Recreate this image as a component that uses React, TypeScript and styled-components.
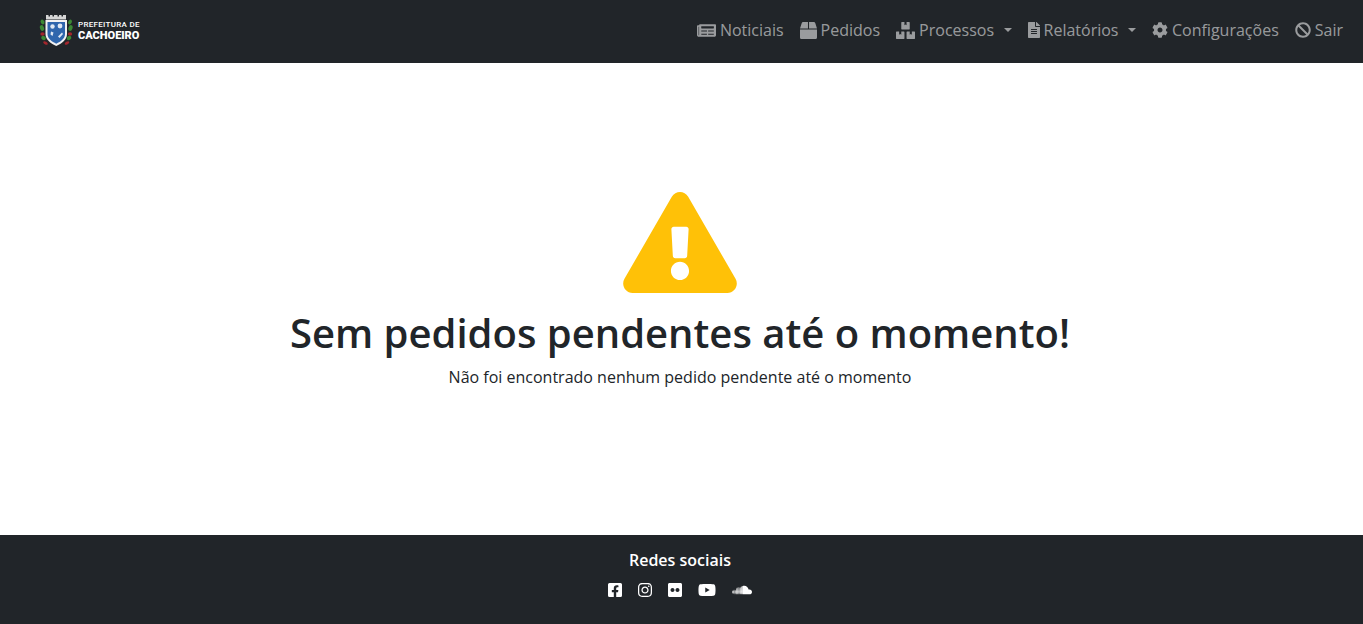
import React from "react";
import styled, { createGlobalStyle } from "styled-components";
import {
  FaBan,
  FaBox,
  FaBoxes,
  FaCog,
  FaExclamationTriangle,
  FaFacebookSquare,
  FaFileAlt,
  FaFlickr,
  FaInstagram,
  FaNewspaper,
  FaSoundcloud,
  FaYoutube,
} from "react-icons/fa";

const GlobalStyle = createGlobalStyle`
  * {
    box-sizing: border-box;
  }
  body {
    margin: 0;
    font-family: "Open Sans", sans-serif;
    font-size: 16px;
    color: #212529;
    background: #fff;
  }
`;

function Laurel() {
  return (
    <>
      <ellipse cx="4.500" cy="7" rx="1.800" ry="2.600" fill="#3b8a35" transform="rotate(-25 4.500 7)" />
      <ellipse cx="4" cy="13" rx="2" ry="3" fill="#3b8a35" transform="rotate(-20 4 13)" />
      <ellipse cx="4.500" cy="19" rx="2.200" ry="1.700" fill="#a3262c" />
      <ellipse cx="5.500" cy="23" rx="2.400" ry="2" fill="#3b8a35" transform="rotate(30 5.500 23)" />
      <ellipse cx="7.500" cy="28" rx="2.500" ry="1.400" fill="#a3262c" transform="rotate(30 7.500 28)" />
    </>
  );
}

function Logo() {
  return (
    <LogoBox>
      <svg width="36" height="34" viewBox="0 0 36 34">
        {/* crown */}
        <path
          d="M8 0h2.500v1.500H12V0h2.500v1.500H16V0h3.500v1.500H21V0h2.500v1.500H25V0h3v4.500H8z"
          fill="#d6d6d6"
        />
        {/* shield */}
        <path d="M7.500 5h21.500v14c0 6-5.500 9.500-10.750 12C13 28.500 7.500 25 7.500 19z" fill="#f2f2f2" />
        <path d="M9.500 7h17.500v12c0 4.800-4.300 7.500-8.750 9.700C13.800 26.500 9.500 23.800 9.500 19z" fill="#2f66ad" />
        <circle cx="14.500" cy="11.500" r="2.200" fill="#dfe8f3" />
        <circle cx="22" cy="11" r="2.400" fill="#dfe8f3" />
        <path d="M13 16.500l2.500 1-1 3.500-2-1.500z" fill="#dfe8f3" />
        <path d="M20 21.500l4-4 1 1.500-3.500 4z" fill="#dfe8f3" />
        <Laurel />
        <g transform="translate(36.500 0) scale(-1 1)">
          <Laurel />
        </g>
      </svg>
      <LogoText>
        <LogoTop>PREFEITURA DE</LogoTop>
        <LogoBottom>CACHOEIRO</LogoBottom>
      </LogoText>
    </LogoBox>
  );
}

export default function App() {
  return (
    <Page>
      <GlobalStyle />
      <Navbar>
        <Logo />
        <Nav>
          <NavItem>
            <IconSlot $w={19} $h={17}>
              <FaNewspaper />
            </IconSlot>
            Noticiais
          </NavItem>
          <NavItem>
            <IconSlot $w={17} $h={17}>
              <FaBox />
            </IconSlot>
            Pedidos
          </NavItem>
          <NavItem>
            <IconSlot $w={19} $h={17}>
              <FaBoxes />
            </IconSlot>
            Processos
            <Caret />
          </NavItem>
          <NavItem>
            <IconSlot $w={12}>
              <FaFileAlt />
            </IconSlot>
            Relatórios
            <Caret />
          </NavItem>
          <NavItem>
            <IconSlot $w={16}>
              <FaCog />
            </IconSlot>
            Configurações
          </NavItem>
          <NavItem>
            <IconSlot $w={16}>
              <FaBan />
            </IconSlot>
            Sair
          </NavItem>
        </Nav>
      </Navbar>
      <Main>
        <WarningIcon>
          <FaExclamationTriangle />
        </WarningIcon>
        <Title>Sem pedidos pendentes até o momento!</Title>
        <Subtitle>Não foi encontrado nenhum pedido pendente até o momento</Subtitle>
      </Main>
      <Footer>
        <FooterTitle>Redes sociais</FooterTitle>
        <Socials>
          <IconSlot $w={14}>
            <FaFacebookSquare />
          </IconSlot>
          <IconSlot $w={14}>
            <FaInstagram />
          </IconSlot>
          <IconSlot $w={14}>
            <FaFlickr />
          </IconSlot>
          <IconSlot $w={18}>
            <FaYoutube />
          </IconSlot>
          <IconSlot $w={20}>
            <FaSoundcloud />
          </IconSlot>
        </Socials>
      </Footer>
    </Page>
  );
}

const Page = styled.div`
  display: flex;
  flex-direction: column;
  height: 624px;
`;

const Navbar = styled.nav`
  display: flex;
  align-items: center;
  justify-content: space-between;
  height: 63px;
  padding: 0 12px 3px 38px;
  background: #212529;
`;

const LogoBox = styled.div`
  display: flex;
  align-items: center;
  gap: 4px;
  margin-top: 3px;
`;

const LogoText = styled.div`
  display: flex;
  flex-direction: column;
  margin-top: -3px;
  color: #fff;
  font-family: "Roboto", sans-serif;
  font-weight: 700;
  white-space: nowrap;
`;

const LogoTop = styled.span`
  font-size: 8px;
  line-height: 10px;
  letter-spacing: 0.3px;
  font-weight: 500;
`;

const LogoBottom = styled.span`
  font-size: 11px;
  line-height: 11px;
  font-weight: 900;
`;

const Nav = styled.div`
  display: flex;
  align-items: center;
`;

const NavItem = styled.a`
  display: flex;
  align-items: center;
  gap: 4px;
  padding: 8px;
  color: rgba(255, 255, 255, 0.55);
  font-size: 16px;
  line-height: 24px;
  white-space: nowrap;
`;

const IconSlot = styled.span<{ $w: number; $h?: number }>`
  display: inline-flex;
  align-items: center;
  width: ${(p) => p.$w}px;
  height: 16px;

  svg {
    width: ${(p) => p.$w}px;
    height: ${(p) => p.$h ?? 16}px;
    flex: none;
  }
`;

const Caret = styled.span`
  width: 0;
  height: 0;
  margin-left: 5.5px;
  border-top: 4.8px solid rgba(255, 255, 255, 0.55);
  border-left: 4.8px solid transparent;
  border-right: 4.8px solid transparent;
`;

const Main = styled.main`
  flex: 1;
  display: flex;
  flex-direction: column;
  align-items: center;
  padding: 129px 3px 0 0;
`;

const WarningIcon = styled.div`
  display: flex;
  margin-bottom: 16px;
  color: #ffc107;

  svg {
    width: 114px;
    height: 101px;
  }
`;

const Title = styled.h1`
  margin: 0 0 8px;
  font-size: 40px;
  line-height: 48px;
  font-weight: 600;
`;

const Subtitle = styled.p`
  margin: 0;
  font-size: 16px;
  line-height: 24px;
`;

const Footer = styled.footer`
  display: flex;
  flex-direction: column;
  align-items: center;
  height: 89px;
  padding: 13px 3px 0 0;
  background: #212529;
  color: #fff;
`;

const FooterTitle = styled.div`
  font-size: 16px;
  line-height: 24px;
  font-weight: 600;
`;

const Socials = styled.div`
  display: flex;
  align-items: center;
  gap: 16px;
  margin-top: 6px;
  height: 24px;
`;
